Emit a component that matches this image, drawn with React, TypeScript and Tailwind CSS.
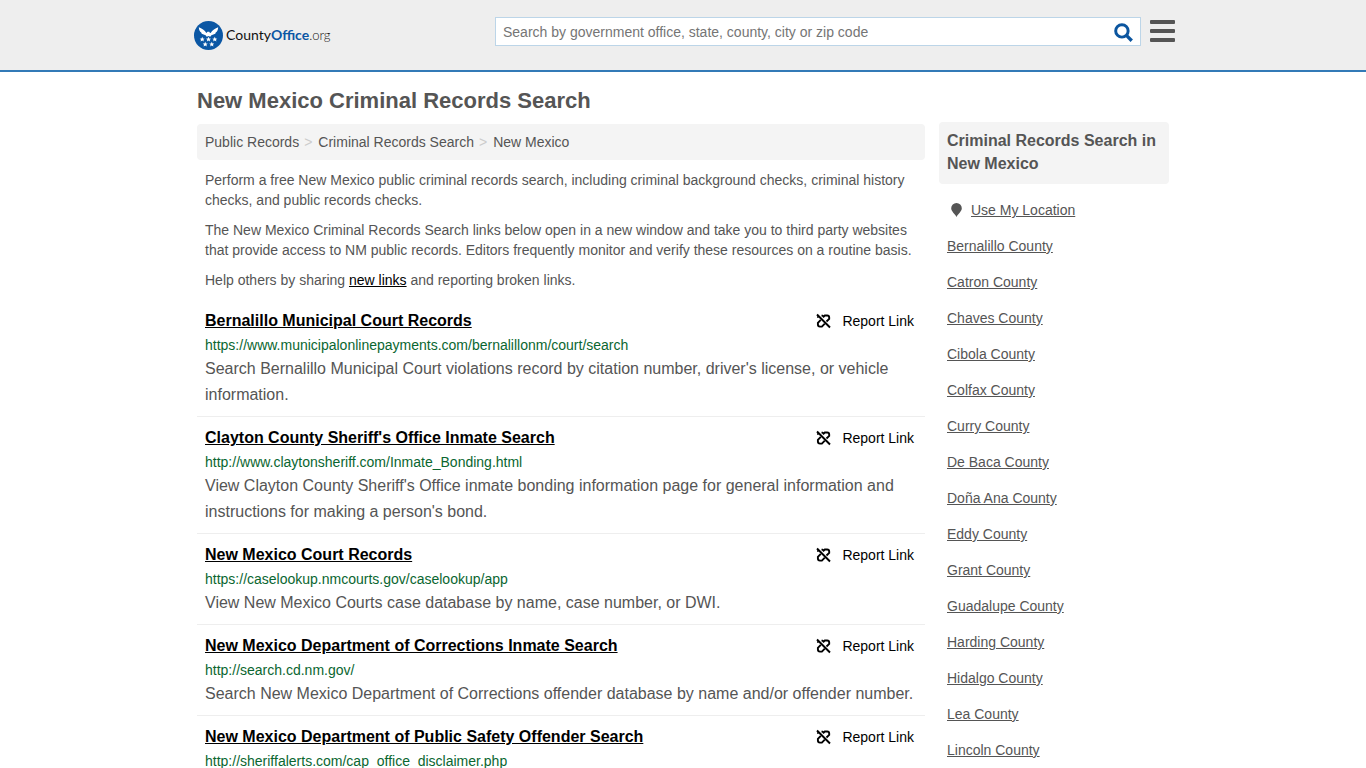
interface RecordLink {
  title: string;
  url: string;
  description: string;
}

const records: RecordLink[] = [
  {
    title: "Bernalillo Municipal Court Records",
    url: "https://www.municipalonlinepayments.com/bernalillonm/court/search",
    description:
      "Search Bernalillo Municipal Court violations record by citation number, driver's license, or vehicle information.",
  },
  {
    title: "Clayton County Sheriff's Office Inmate Search",
    url: "http://www.claytonsheriff.com/Inmate_Bonding.html",
    description:
      "View Clayton County Sheriff's Office inmate bonding information page for general information and instructions for making a person's bond.",
  },
  {
    title: "New Mexico Court Records",
    url: "https://caselookup.nmcourts.gov/caselookup/app",
    description: "View New Mexico Courts case database by name, case number, or DWI.",
  },
  {
    title: "New Mexico Department of Corrections Inmate Search",
    url: "http://search.cd.nm.gov/",
    description:
      "Search New Mexico Department of Corrections offender database by name and/or offender number.",
  },
  {
    title: "New Mexico Department of Public Safety Offender Search",
    url: "http://sheriffalerts.com/cap_office_disclaimer.php",
    description: "",
  },
];

const counties = [
  "Bernalillo County",
  "Catron County",
  "Chaves County",
  "Cibola County",
  "Colfax County",
  "Curry County",
  "De Baca County",
  "Doña Ana County",
  "Eddy County",
  "Grant County",
  "Guadalupe County",
  "Harding County",
  "Hidalgo County",
  "Lea County",
  "Lincoln County",
];

// five-pointed star centred on the origin
const STAR = "M0-2.6 .8-.8 2.600-.7 1.200.5 1.700 2.300 0 1.300-1.700 2.300-1.200.5-2.600-.7-.8-.8Z";

function Logo() {
  return (
    <a href="#" aria-label="CountyOffice.org" className="flex items-center gap-[3px]">
      <svg viewBox="0 0 30 30" className="size-[29px]">
        <circle cx="15" cy="15" r="15" fill="#0b57a4" />
        <g fill="#fff">
          <path d="M5 6.500C8 7.500 11 9.500 12.800 12.400L14 11.200 15.800 11 16.300 12.200 17.200 12.400C19 9.500 22 7.500 25 6.500 25 9 24 11 22.500 12L22 13.200 20 14 18 14.700 16.800 16.200 15 15.600 13.200 16.200 12 14.700 10 14 8 13.200 7.500 12C6 11 5 9 5 6.500Z" />
          <path d={STAR} transform="translate(8.500 19)" />
          <path d={STAR} transform="translate(15 19)" />
          <path d={STAR} transform="translate(21.500 19)" />
          <path d={STAR} transform="translate(11.600 24)" />
          <path d={STAR} transform="translate(18.400 24)" />
        </g>
      </svg>
      <span className="font-[Lato,sans-serif] text-sm leading-5 text-[#111]">
        County<span className="font-bold text-[#0b57a4]">Office</span>
        <span className="text-[13px] font-light">.org</span>
      </span>
    </a>
  );
}

function BrokenLinkIcon() {
  return (
    <svg viewBox="0 0 16 16" className="size-4" fill="none" stroke="#000" strokeWidth="1.9">
      <path d="M2 1.500 15 14.500" />
      <path d="M6.500 2.600H7.500L8.600 3.700 9.800 2.500H12.200A2 2 0 0 1 14.200 4.500V5.800L11.500 8.500" />
      <path d="M5.800 6.800 2.900 9.800V11.600A2 2 0 0 0 4.900 13.600H6.900L9.800 10.700" />
      <path d="M2.900 2.400V5" strokeWidth="1.300" />
    </svg>
  );
}

function Header() {
  return (
    <header className="border-b-2 border-[#337ab7] bg-[#eee]">
      <div className="mx-auto flex h-[70px] max-w-[984px] items-start pt-[17px] pl-[3px]">
        <div className="flex h-9 flex-1 items-center">
          <Logo />
        </div>
        <form className="relative h-[29px] w-[646px]">
          <input
            type="text"
            aria-label="Search"
            placeholder="Search by government office, state, county, city or zip code"
            className="h-full w-full border border-[#bcd5e8] bg-white pr-10 pl-[7px] text-sm placeholder:text-[#757575]"
          />
          <button type="button" aria-label="Submit search" className="absolute top-1 right-1.5 p-0.5">
            <svg viewBox="0 0 18 18" className="size-[19px]" fill="none" stroke="#0b559f">
              <circle cx="7.500" cy="7.500" r="5.900" strokeWidth="2.800" />
              <path d="M12 12 16.800 16.800" strokeWidth="3.200" />
            </svg>
          </button>
        </form>
        <button type="button" aria-label="Menu" className="ml-[9px] pt-[3px]">
          <svg viewBox="0 0 25 22" className="h-[22px] w-[25px]" fill="#555">
            <rect width="25" height="4" rx="1" />
            <rect y="9" width="25" height="4" rx="1" />
            <rect y="18" width="25" height="4" rx="1" />
          </svg>
        </button>
      </div>
    </header>
  );
}

function RecordItem({ title, url, description }: RecordLink) {
  return (
    <li className="border-b border-[#eee] px-2 pt-[11px] pb-2">
      <div className="flex justify-between pr-[3px]">
        <a href={url} className="text-base leading-5 font-bold text-black underline">
          {title}
        </a>
        <button type="button" className="flex items-center gap-[11px] text-sm leading-5 text-black">
          <BrokenLinkIcon />
          Report Link
        </button>
      </div>
      <p className="mt-1 mb-px text-sm leading-5 text-[#0a6630]">{url}</p>
      <p className="text-base leading-[26px]">{description}</p>
    </li>
  );
}

function Sidebar() {
  return (
    <aside className="mt-[9px] w-[230px] shrink-0">
      <h2 className="rounded bg-[#f4f4f4] px-2 pt-[7px] pb-[9px] text-base leading-[23px] font-bold">
        Criminal Records Search in New Mexico
      </h2>
      <ul className="mt-2 px-2 text-sm leading-9">
        <li className="flex items-center gap-[9px] pl-1">
          <svg viewBox="0 0 11 14" className="h-3.5 w-[11px]" fill="#555">
            <path d="M5.500 0A5.300 5.300 0 0 0 .2 5.300C.2 8.500 4 11 5.500 14 7 11 10.800 8.500 10.800 5.300A5.300 5.300 0 0 0 5.500 0Z" />
          </svg>
          <a href="#" className="underline">
            Use My Location
          </a>
        </li>
        {counties.map((county) => (
          <li key={county}>
            <a href="#" className="underline">
              {county}
            </a>
          </li>
        ))}
      </ul>
    </aside>
  );
}

export default function App() {
  return (
    <div className="h-screen overflow-hidden bg-white font-['Liberation_Sans',Arial,sans-serif] text-[#555]">
      <Header />
      <div className="mx-auto max-w-[972px] pt-[17px]">
        <h1 className="text-[22px] leading-6 font-bold">New Mexico Criminal Records Search</h1>
        <div className="flex gap-3.5">
          <main className="mt-[11px] min-w-0 flex-1">
            <nav aria-label="Breadcrumb" className="rounded bg-[#f4f4f4] px-2 py-2">
              <ol className="flex gap-[5px] text-sm leading-5">
                <li>
                  <a href="#">Public Records</a>
                </li>
                <li className="pr-px text-[#ccc]">&gt;</li>
                <li>
                  <a href="#">Criminal Records Search</a>
                </li>
                <li className="pr-px text-[#ccc]">&gt;</li>
                <li>
                  <a href="#">New Mexico</a>
                </li>
              </ol>
            </nav>
            <div className="space-y-2.5 px-2 py-2.5 text-sm leading-5">
              <p>
                Perform a free New Mexico public criminal records search, including criminal background checks,
                criminal history checks, and public records checks.
              </p>
              <p>
                The New Mexico Criminal Records Search links below open in a new window and take you to third party
                websites that provide access to NM public records. Editors frequently monitor and verify these
                resources on a routine basis.
              </p>
              <p>
                Help others by sharing{" "}
                <a href="#" className="text-black underline">
                  new links
                </a>{" "}
                and reporting broken links.
              </p>
            </div>
            <ul>
              {records.map((record) => (
                <RecordItem key={record.title} {...record} />
              ))}
            </ul>
          </main>
          <Sidebar />
        </div>
      </div>
    </div>
  );
}
